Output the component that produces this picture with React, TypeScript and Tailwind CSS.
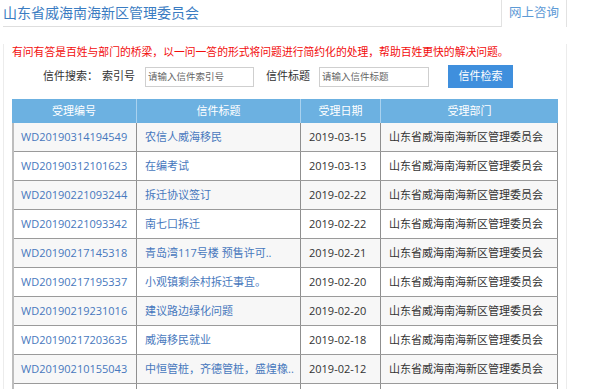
import React from "react"

const letters = [
  { id: "WD20190314194549", title: "农信人威海移民", date: "2019-03-15" },
  { id: "WD20190312101623", title: "在编考试", date: "2019-03-13" },
  { id: "WD20190221093244", title: "拆迁协议签订", date: "2019-02-22" },
  { id: "WD20190221093342", title: "南七口拆迁", date: "2019-02-22" },
  { id: "WD20190217145318", title: "青岛湾117号楼 预售许可..", date: "2019-02-21" },
  { id: "WD20190217195337", title: "小观镇剩余村拆迁事宜。", date: "2019-02-20" },
  { id: "WD20190219231016", title: "建议路边绿化问题", date: "2019-02-20" },
  { id: "WD20190217203635", title: "威海移民就业", date: "2019-02-18" },
  { id: "WD20190210155043", title: "中恒管桩，齐德管桩，盛煌橡..", date: "2019-02-12" },
]

const dept = "山东省威海南海新区管理委员会"

export default function App() {
  return (
    <div
      className="w-[589px] h-[389px] overflow-hidden bg-white"
      style={{ fontFamily: '"Open Sans", "Noto Sans CJK SC", sans-serif' }}
    >
      <div className="ml-[3px] w-[564px]">
        {/* top bar */}
        <div className="flex h-[27px]">
          <div className="flex-1 flex items-center border-b border-[#dedede] text-[14px] text-[#3a7cc2] leading-none">
            {dept}
          </div>
          <div className="w-[66px] flex items-center justify-center border-l border-r border-[#e2e2e2] text-[12.5px] text-[#5d9ad6] leading-none">
            网上咨询
          </div>
        </div>

        {/* body */}
        <div className="border-l border-r border-[#ececec] pl-[8px] pb-[20px]">
          <p className="mt-[17px] text-[10.8px] leading-[16px] text-[#f20d0d] whitespace-nowrap">
            有问有答是百姓与部门的桥梁，以一问一答的形式将问题进行简约化的处理，帮助百姓更快的解决问题。
          </p>

          <div className="mt-[5px] flex items-center h-[23px] text-[11px] text-[#333]">
            <span className="ml-[31px] w-[59px] whitespace-nowrap">信件搜索：</span>
            <span className="w-[43px] whitespace-nowrap">索引号</span>
            <input
              className="w-[109px] h-[20px] border border-[#cfcfcf] pl-[2px] text-[9.5px] outline-none placeholder:text-[#666]"
              placeholder="请输入信件索引号"
            />
            <span className="w-[65px] pl-[12px] whitespace-nowrap">信件标题</span>
            <input
              className="w-[110px] h-[20px] border border-[#cfcfcf] pl-[2px] text-[9.5px] outline-none placeholder:text-[#666]"
              placeholder="请输入信件标题"
            />
            <button className="ml-[19px] w-[65px] h-[23px] bg-[#3f8fdd] text-white text-[11px]">
              信件检索
            </button>
          </div>

          {/* table */}
          <div className="mt-[11px] w-[546px] text-[11px]">
            <div className="grid grid-cols-[125px_164px_80px_177px] h-[24px] bg-[#6cb1e1] text-white">
              <div className="flex items-center justify-center border-r border-[#a9d2ef]">受理编号</div>
              <div className="flex items-center justify-center border-r border-[#a9d2ef]">信件标题</div>
              <div className="flex items-center justify-center border-r border-[#a9d2ef]">受理日期</div>
              <div className="flex items-center justify-center">受理部门</div>
            </div>
            <div className="border-l-2 border-[#bdbdbd]">
              {letters.map((l, i) => (
                <div
                  key={l.id}
                  className={`grid grid-cols-[123px_164px_80px_177px] h-[29px] border-b border-[#9a9a9a] ${
                    i % 2 === 0 ? "bg-[#f7f7f7]" : "bg-white"
                  }`}
                >
                  <div className="flex items-center pl-[7px] border-r border-[#8f8f8f] text-[#4778bd] whitespace-nowrap">
                    {l.id}
                  </div>
                  <div className="flex items-center pl-[8px] border-r border-[#8f8f8f] text-[#4778bd] whitespace-nowrap overflow-hidden">
                    {l.title}
                  </div>
                  <div className="flex items-center pl-[8px] border-r border-[#8f8f8f] text-[#333] whitespace-nowrap">
                    {l.date}
                  </div>
                  <div className="flex items-center pl-[8px] border-r border-[#8f8f8f] text-[#333] whitespace-nowrap">
                    {dept}
                  </div>
                </div>
              ))}
              {/* next row, only its top edge is in view */}
              <div className="grid grid-cols-[123px_164px_80px_177px] h-[29px] bg-white">
                <div className="border-r border-[#8f8f8f]" />
                <div className="border-r border-[#8f8f8f]" />
                <div className="border-r border-[#8f8f8f]" />
                <div className="border-r border-[#8f8f8f]" />
              </div>
            </div>
          </div>
        </div>
      </div>
    </div>
  )
}
